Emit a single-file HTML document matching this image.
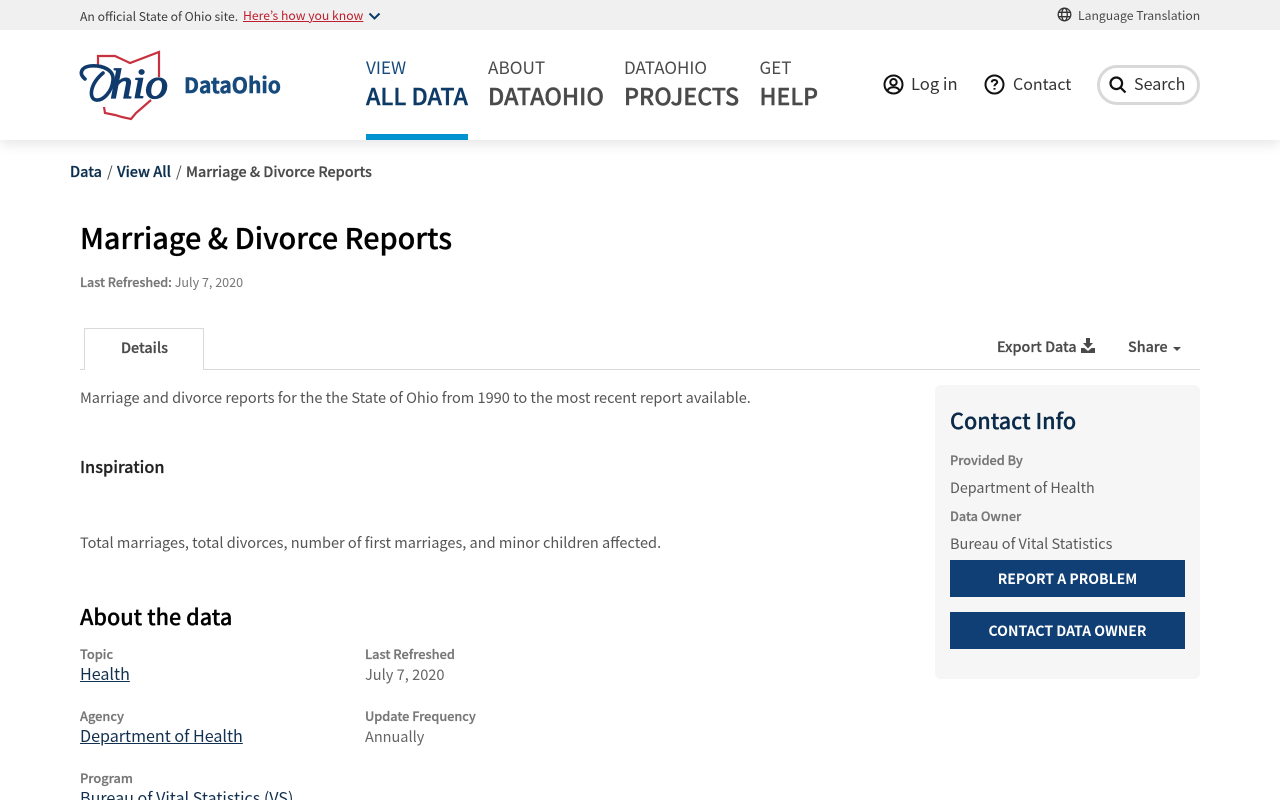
<!DOCTYPE html>
<html lang="en"><head><meta charset="utf-8"><title>Marriage & Divorce Reports</title>
<style>
*{box-sizing:border-box}
html,body{margin:0;padding:0;width:1280px;height:800px;overflow:hidden;background:#fff}
body{position:relative;font-family:"Noto Sans CJK JP","Liberation Sans",sans-serif;color:#4a4a4a}
.t{position:absolute;white-space:nowrap;line-height:24px;margin:0;font-weight:400}
.b{font-weight:500;-webkit-text-stroke:.25px currentColor}
a{color:inherit}
svg{position:absolute;display:block}
</style></head><body>
<div style="position:absolute;left:0;top:30px;width:1280px;height:110px;background:#fff;box-shadow:0 4px 12px rgba(0,0,0,.1)"></div>
<div style="position:absolute;left:0;top:0;width:1280px;height:30px;background:#f0f0f0"></div>
<div class="t" style="left:80px;top:4px;font-size:12.200px;color:#3d3d3d">An official State of Ohio site.</div>
<a class="t" href="#" style="left:243px;top:3px;font-size:12.200px;color:#bf1e2e">Here’s how you know</a>
<svg style="left:367px;top:11px" width="15" height="10" viewBox="0 0 15 10"><path d="M2.500 2.500L7.500 7.500L12.500 2.500" fill="none" stroke="#0d3a66" stroke-width="2"/></svg>
<svg style="left:1057px;top:7px" width="15" height="15" viewBox="0 0 15 15" fill="none" stroke="#333" stroke-width="1.300"><circle cx="7.500" cy="7.500" r="6.300"/><ellipse cx="7.500" cy="7.500" rx="2.800" ry="6.300"/><path d="M1.500 5.300H13.500M1.500 9.700H13.500"/></svg>
<div class="t" style="left:1078px;top:3px;font-size:12.200px;color:#4a4a4a">Language Translation</div>

<svg style="left:75px;top:45px" width="100" height="80" viewBox="75 45 100 80">
<path d="M98 67V56H115L130 63L159 52V77" fill="none" stroke="#c8323f" stroke-width="2.200"/>
<path d="M104 107L105 113L115 115L122 117L131 119L136 113L143 107L151 100" fill="none" stroke="#c8323f" stroke-width="2.200"/>
<path d="M85 79C78 73 82 67 90 66C103 65 114 70 113 80C112 92 103 101 96 100C89 99 89 85 103 73" fill="none" stroke="#103a6b" stroke-width="3.600" stroke-linecap="round"/>
<text x="110" y="98" font-family="Liberation Serif,serif" font-style="italic" font-size="42" fill="#103a6b" stroke="#103a6b" stroke-width="1.300" textLength="58" lengthAdjust="spacingAndGlyphs">hio</text>
</svg>
<div class="t" style="left:184px;top:73px;font-size:21px;font-weight:700;color:#164a7c;-webkit-text-stroke:.5px #164a7c">DataOhio</div>

<div class="t" style="left:366px;top:55px;font-size:17.200px;color:#164a7c">VIEW</div>
<div class="t b" style="left:366px;top:83px;font-size:23.200px;color:#0d3a66;-webkit-text-stroke:.4px #0d3a66">ALL DATA</div>
<div style="position:absolute;left:366px;top:134px;width:102px;height:6px;background:#0093d0"></div>
<div class="t" style="left:488px;top:55px;font-size:17.200px">ABOUT</div>
<div class="t b" style="left:488px;top:83px;font-size:23.300px;-webkit-text-stroke:.4px #4a4a4a">DATAOHIO</div>
<div class="t" style="left:624px;top:55px;font-size:17px">DATAOHIO</div>
<div class="t b" style="left:624px;top:83px;font-size:23.200px;-webkit-text-stroke:.4px #4a4a4a">PROJECTS</div>
<div class="t" style="left:759.500px;top:55px;font-size:17px">GET</div>
<div class="t b" style="left:759.500px;top:83px;font-size:23px;-webkit-text-stroke:.4px #4a4a4a">HELP</div>

<svg style="left:883px;top:74px" width="21" height="21" viewBox="0 0 21 21" fill="none" stroke="#111" stroke-width="2"><circle cx="10.500" cy="10.500" r="9"/><circle cx="10.500" cy="8.200" r="3.200"/><path d="M4.500 16.800C5.500 13.800 8 13.300 10.500 13.300S15.500 13.800 16.500 16.800"/></svg>
<div class="t" style="left:911px;top:71px;font-size:16.600px;color:#333">Log in</div>
<svg style="left:984px;top:74px" width="21" height="21" viewBox="0 0 21 21" fill="none" stroke="#111" stroke-width="2"><circle cx="10.500" cy="10.500" r="9"/><path d="M7.800 8.300C7.900 6.700 9 6 10.500 6C12.100 6 13.200 6.900 13.200 8.200C13.200 10 10.500 10 10.500 12.300"/><path d="M10.500 14V15.600"/></svg>
<div class="t" style="left:1013px;top:71px;font-size:16px;color:#333">Contact</div>
<div style="position:absolute;left:1097px;top:65px;width:103px;height:40px;border:3px solid #d8d8d8;border-radius:20px;background:#fff"></div>
<svg style="left:1108px;top:75px" width="20" height="20" viewBox="0 0 20 20" fill="none" stroke="#111" stroke-width="2.200"><circle cx="8.300" cy="8.300" r="5.800"/><path d="M12.500 12.500L17.500 17.500"/></svg>
<div class="t" style="left:1134px;top:71px;font-size:16.100px;color:#333">Search</div>

<div class="t b" style="left:70px;top:160px;font-size:14.500px;color:#0d2f4f">Data</div>
<div class="t" style="left:107px;top:160px;font-size:14.500px;color:#4a4a4a">/</div>
<div class="t b" style="left:117px;top:160px;font-size:14.500px;color:#0d2f4f">View All</div>
<div class="t" style="left:176px;top:160px;font-size:14.500px;color:#4a4a4a">/</div>
<div class="t b" style="left:186px;top:160px;font-size:14.400px;color:#4a4a4a">Marriage &amp; Divorce Reports</div>

<h1 class="t" style="left:80px;top:221px;font-size:28.800px;line-height:34px;font-weight:500;color:#000;-webkit-text-stroke:.3px #000">Marriage &amp; Divorce Reports</h1>
<div class="t" style="left:80px;top:270px;font-size:12.550px;color:#767676"><span class="b">Last Refreshed:</span> July 7, 2020</div>

<div style="position:absolute;left:80px;top:369px;width:1120px;height:1px;background:#d9d9d9"></div>
<div style="position:absolute;left:84px;top:328px;width:120px;height:42px;background:#fff;border:1px solid #d9d9d9;border-bottom:0"></div>
<div class="t b" style="left:121px;top:336px;font-size:14.400px">Details</div>
<div class="t b" style="left:997px;top:335px;font-size:14.300px">Export Data</div>
<svg style="left:1080px;top:338px" width="16" height="15" viewBox="0 0 16 15" fill="#4a4a4a"><path d="M6 0H10V5H13L8 10.500L3 5H6Z"/><path d="M1 10H4.500L8 13L11.500 10H15V15H1Z"/></svg>
<div class="t b" style="left:1128px;top:335px;font-size:14.300px">Share</div>
<svg style="left:1172px;top:347px" width="10" height="5" viewBox="0 0 10 5" fill="#4a4a4a"><path d="M1 0H9L5 4Z"/></svg>

<div class="t" style="left:80px;top:386px;font-size:14.550px;color:#555">Marriage and divorce reports for the the State of Ohio from 1990 to the most recent report available.</div>
<div class="t b" style="left:80px;top:454px;font-size:16.300px;color:#222">Inspiration</div>
<div class="t" style="left:80px;top:531px;font-size:14.550px;color:#555">Total marriages, total divorces, number of first marriages, and minor children affected.</div>
<h2 class="t" style="left:80px;top:605px;font-size:21.600px;font-weight:500;color:#000;-webkit-text-stroke:.3px #000">About the data</h2>

<div class="t b" style="left:80px;top:642px;font-size:12.800px;color:#767676">Topic</div>
<a class="t" href="#" style="left:80px;top:661px;font-size:16.100px;color:#12304f">Health</a>
<div class="t b" style="left:365px;top:642px;font-size:12.800px;color:#767676">Last Refreshed</div>
<div class="t" style="left:365px;top:663px;font-size:14.600px;color:#666">July 7, 2020</div>
<div class="t b" style="left:80px;top:704px;font-size:12.800px;color:#767676">Agency</div>
<a class="t" href="#" style="left:80px;top:723px;font-size:16.100px;color:#12304f">Department of Health</a>
<div class="t b" style="left:365px;top:704px;font-size:12.700px;color:#767676">Update Frequency</div>
<div class="t" style="left:365px;top:725px;font-size:14.500px;color:#666">Annually</div>
<div class="t b" style="left:80px;top:766px;font-size:12.800px;color:#767676">Program</div>
<a class="t" href="#" style="left:80px;top:785px;font-size:16.100px;color:#12304f">Bureau of Vital Statistics (VS)</a>

<div style="position:absolute;left:935px;top:385px;width:265px;height:294px;background:#f6f6f6;border-radius:6px"></div>
<div class="t b" style="left:950px;top:409px;font-size:21.600px;color:#0b2a4a;-webkit-text-stroke:.3px #0b2a4a">Contact Info</div>
<div class="t b" style="left:950px;top:448px;font-size:12.700px;color:#767676">Provided By</div>
<div class="t" style="left:950px;top:476px;font-size:14.300px;color:#5a5a5a">Department of Health</div>
<div class="t b" style="left:950px;top:504px;font-size:12.700px;color:#767676">Data Owner</div>
<div class="t" style="left:950px;top:532px;font-size:14.500px;color:#5a5a5a">Bureau of Vital Statistics</div>
<div class="t" style="left:950px;top:560px;width:235px;height:37px;background:#0f3f75;color:#fff;font-weight:700;font-size:14px;line-height:39px;text-align:center">REPORT A PROBLEM</div>
<div class="t" style="left:950px;top:612px;width:235px;height:37px;background:#0f3f75;color:#fff;font-weight:700;font-size:14px;line-height:39px;text-align:center">CONTACT DATA OWNER</div>
</body></html>
